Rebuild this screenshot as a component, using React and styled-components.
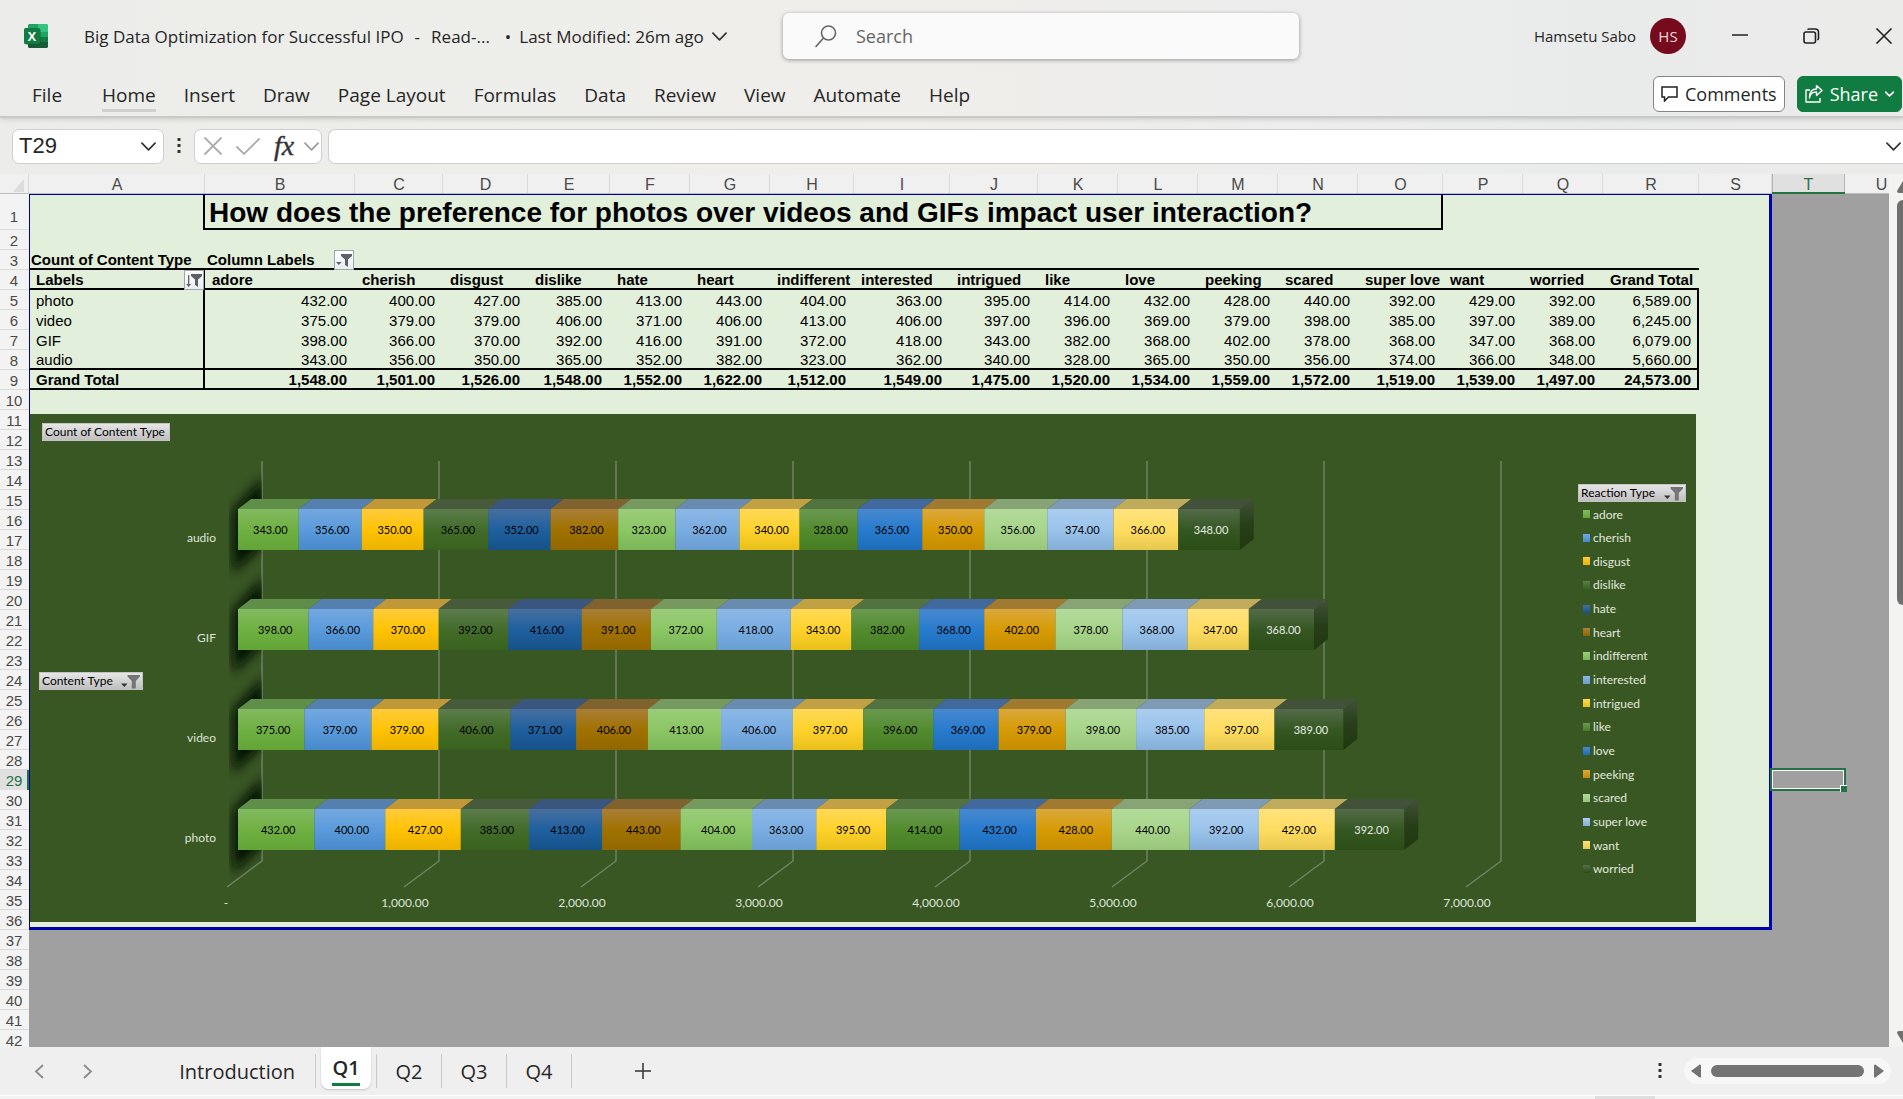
import React from "react";
import styled, { createGlobalStyle, css } from "styled-components";

const UI = '"Open Sans", "Noto Sans", sans-serif';
const SHEET = '"Liberation Sans", Arial, sans-serif';
const CHART = 'Lato, "Open Sans", sans-serif';

const GlobalStyle = createGlobalStyle`
  *, *::before, *::after { box-sizing: border-box; }
  html, body { margin: 0; height: 100%; overflow: hidden; }
  body { font-family: ${UI}; color: #262626; }
  button, input { font: inherit; color: inherit; }
  button { background: none; border: 0; padding: 0; cursor: pointer; }
  svg { display: block; flex: none; }
`;

/* ---------- window frame ---------- */

const Window = styled.div`
  display: flex;
  flex-direction: column;
  height: 100vh;
  overflow: hidden;
  background: linear-gradient(90deg, #ecedea 0%, #efeeea 48%, #ededed 66%, #e9ebea 85%, #ebebea 100%);
`;

const Header = styled.header`
  flex: none;
  height: 118px;
  border-bottom: 2px solid #c9c9c7;
  box-shadow: 0 1px 5px rgba(0, 0, 0, 0.16);
`;

const TitleBar = styled.div`
  display: grid;
  grid-template-columns: minmax(0, 783fr) minmax(0, 516fr) minmax(0, 604fr);
  align-items: center;
  height: 72px;
`;

const DocTitle = styled.div`
  display: flex;
  align-items: center;
  padding-left: 24px;
  font-size: 17px;
  white-space: nowrap;
`;

const DocButton = styled.button`
  display: flex;
  align-items: center;
  gap: 11px;
  margin-left: 36px;
`;

const DocStatus = styled.span`
  display: flex;
  align-items: center;
  gap: 8px;
  margin-left: 4px;
`;

const SearchBox = styled.label`
  display: flex;
  align-items: center;
  gap: 19px;
  height: 46px;
  padding-left: 32px;
  border-radius: 6px;
  background: #fafafa;
  color: #5f5f5f;
  box-shadow: 0 1px 4px rgba(0, 0, 0, 0.38);

  input {
    flex: 1;
    min-width: 0;
    border: 0;
    outline: 0;
    padding: 0;
    background: transparent;
    font-size: 18px;
  }
  input::placeholder { color: #666; opacity: 1; }
`;

const Account = styled.div`
  display: flex;
  align-items: center;
  justify-content: flex-end;
  padding-right: 10px;
  font-size: 15px;
`;

const Avatar = styled.span`
  display: grid;
  place-items: center;
  width: 36px;
  height: 36px;
  margin-left: 14px;
  border-radius: 50%;
  background: #750b1c;
  color: #f3d5da;
`;

const WindowButtons = styled.div`
  display: flex;
  gap: 55px;
  margin-left: 46px;
`;

const Ribbon = styled.div`
  display: flex;
  align-items: center;
  justify-content: space-between;
  height: 44px;
  padding: 0 1px 0 32px;
`;

const RibbonTabs = styled.nav`
  display: flex;
  gap: 28px;
  font-size: 19px;
  white-space: nowrap;
`;

const RibbonTab = styled.button`
  height: 32px;
  margin-top: 4px;
  line-height: 26px;
  border-bottom: 3px solid ${(p) => (p.$active ? "#cfcfce" : "transparent")};
  &:first-child { margin-right: 12px; }
`;

const RibbonActions = styled.div`
  display: flex;
  gap: 12px;
`;

const ActionButton = styled.button`
  display: flex;
  align-items: center;
  gap: 7px;
  height: 36px;
  padding: 0 7px;
  border: 1px solid ${(p) => (p.$primary ? "#107c41" : "#858585")};
  border-radius: 6px;
  background: ${(p) => (p.$primary ? "#107c41" : "#fff")};
  color: ${(p) => (p.$primary ? "#fff" : "#262626")};
  font-size: 18px;
`;

/* ---------- formula bar ---------- */

const FormulaBar = styled.div`
  flex: none;
  display: flex;
  align-items: center;
  height: 56px;
  padding-left: 12px;
`;

const Field = styled.div`
  display: flex;
  align-items: center;
  height: 35px;
  border: 1px solid #cfcfcf;
  border-radius: 7px;
  background: #fff;

  input {
    flex: 1;
    width: 0;
    min-width: 0;
    border: 0;
    outline: 0;
    padding: 0 6px;
    background: transparent;
    font-family: ${SHEET};
    font-size: 22px;
  }
`;

const NameField = styled(Field)`
  width: 152px;
  padding-right: 7px;
`;

const FunctionField = styled(Field)`
  width: 128px;
  gap: 14px;
  padding-left: 9px;
`;

const FormulaField = styled(Field)`
  flex: 1;
  margin-left: 6px;
  padding-right: 2px;
  border-right: 0;
  border-radius: 7px 0 0 7px;
`;

const BarDots = styled.div`
  display: flex;
  justify-content: center;
  width: 30px;
`;

const FxButton = styled.button`
  width: 16px;
  font: italic 28px/28px "Liberation Serif", serif;
  color: #333;
  -webkit-text-stroke: 0.4px #333;
`;

/* ---------- worksheet ---------- */

const Body = styled.main`
  flex: 1;
  min-height: 0;
  display: flex;
  overflow: hidden;
`;

const Sheet = styled.div`
  position: relative;
  flex: 1;
  min-width: 0;
  overflow: hidden;
  background: #a0a0a0;
`;

const Grid = styled.table`
  width: ${(p) => p.$width}px;
  table-layout: fixed;
  border-collapse: separate;
  border-spacing: 0;
  font-family: ${SHEET};
  font-size: 15px;
  color: #000;

  td, th { padding: 0; white-space: nowrap; vertical-align: bottom; line-height: 18px; }
`;

const ColHead = styled.th`
  height: 20px;
  font-size: 16px;
  font-weight: 400;
  color: ${(p) => (p.$on ? "#217346" : "#4a4a4a")};
  background: ${(p) => (p.$on ? "#e0e0e0" : "#f0f0f0")};
  box-shadow: ${(p) => (p.$on ? "inset 0 -2px #217346, inset -1px 0 #b5b5b5, inset 1px 0 #b5b5b5" : "inset 0 -1px #bdbdbd, inset -1px 0 #dadada")};
`;

const RowHead = styled.th`
  font-size: 15px;
  font-weight: 400;
  text-align: center;
  color: ${(p) => (p.$on ? "#217346" : "#4a4a4a")};
  background: ${(p) => (p.$on ? "#e0e0e0" : "#f3f3f3")};
  box-shadow: ${(p) => (p.$on ? "inset -2px 0 #217346" : "inset 0 -1px #dadada")};
  && { padding: ${(p) => (p.$tall ? "0 1px 4px 0" : "0 1px 0 0")}; }
`;

const Row = styled.tr`
  height: ${(p) => p.$height || 20}px;
`;

const edgeShadow = {
  top: "inset 0 1px #0000a8",
  left: "inset 1px 0 #0000a8",
  page: "inset -3px 0 #0000b4",
  foot: "inset 0 -3px #0000a8",
  right: "inset -2px 0 #000",
  bottom: "inset 0 -2px #000",
};

const Cell = styled.td`
  overflow: hidden;
  background: ${(p) => (p.$outside ? "#a0a0a0" : "#e2efda")};
  text-align: ${(p) => (p.$number ? "right" : "left")};
  font-weight: ${(p) => (p.$bold ? 700 : 400)};
  ${(p) => p.$edges && css`box-shadow: ${p.$edges.split(" ").map((e) => edgeShadow[e]).join(", ")};`}
  && {
    padding: 0 ${(p) => (p.$number ? 8 : 0)}px ${(p) => (p.$edges && p.$edges.includes("bottom") ? 1 : 0)}px ${(p) => (p.$number ? 0 : p.$indent ? 7 : 2)}px;
  }
`;

const TitleCell = styled(Cell)`
  && { padding: 0 0 1px 4px; line-height: 32px; }
  font-size: 28px;
  font-weight: 700;
`;

const FilterCell = styled(Cell)`
  && { padding-bottom: 0; }
`;

const Split = styled.div`
  display: flex;
  justify-content: space-between;
  height: 20px;
  line-height: 19px;
`;

const FilterButton = styled.button`
  display: grid;
  place-items: center;
  width: 20px;
  height: 20px;
  margin-right: 1px;
  border: 1px solid #9fa6ad;
  background: linear-gradient(#fff, #e9edf1);
`;

const Selection = styled.div`
  position: absolute;
  left: 1770px;
  top: 594px;
  width: 76px;
  height: 23px;
  border: 2px solid #217346;
  box-shadow: inset 0 0 0 1px #fff;

  &::after {
    content: "";
    position: absolute;
    right: -3px;
    bottom: -3px;
    width: 7px;
    height: 7px;
    border: 1px solid #fff;
    border-width: 1px 0 0 1px;
    background: #217346;
  }
`;

/* ---------- chart ---------- */

const ChartFrame = styled.figure`
  position: absolute;
  left: 30px;
  top: 240px;
  width: 1666px;
  height: 508px;
  margin: 0;
  background: #385723;
  font-family: ${CHART};
`;

const FieldButton = styled.button`
  position: absolute;
  left: ${(p) => p.$x}px;
  top: ${(p) => p.$y}px;
  display: flex;
  align-items: center;
  justify-content: space-between;
  width: ${(p) => p.$w}px;
  height: 18px;
  padding: 0 2px;
  border: 1px solid #c3c3c3;
  background: linear-gradient(#e6e6e6, #bfbfbf);
  color: #000;
  font-size: 12px;
  line-height: 16px;
  white-space: nowrap;
`;

const Legend = styled.ul`
  position: absolute;
  left: 1553px;
  top: 91px;
  height: 373px;
  margin: 0;
  padding: 0;
  display: flex;
  flex-direction: column;
  justify-content: space-between;
  list-style: none;
`;

const LegendItem = styled.li`
  display: flex;
  align-items: center;
  gap: 3px;
  height: 18px;
  color: #e3e8df;
  font-size: 12px;

  &::before {
    content: "";
    width: 7px;
    height: 8px;
    background: linear-gradient(${(p) => p.$hi}, ${(p) => p.$lo});
  }
`;

/* ---------- scroll bars and sheet tabs ---------- */

const VScroll = styled.div`
  flex: none;
  display: flex;
  flex-direction: column;
  align-items: flex-start;
  width: 14px;
  padding: 7px 0 4px 8px;
  overflow: hidden;
  background: #f3f3f2;
`;

const VThumb = styled.div`
  width: 12px;
  height: 405px;
  margin-top: 7px;
  margin-bottom: auto;
  border-radius: 6px;
  background: #6f6f6f;
`;

const TabBar = styled.footer`
  flex: none;
  display: flex;
  align-items: center;
  justify-content: space-between;
  height: 48px;
  padding: 0 12px 0 34px;
  background: #f0efef;
`;

const TabGroup = styled.div`
  display: flex;
  align-items: center;
  height: 100%;
`;

const ArrowButton = styled.button`
  width: 10px;
  margin-right: 39px;
`;

const SheetTab = styled.button`
  width: ${(p) => (p.$wide ? 184 : 65)}px;
  height: 34px;
  padding: ${(p) => (p.$wide ? "2px 20px 0 0" : "2px 0 0")};
  text-align: ${(p) => (p.$wide ? "right" : "center")};
  border-right: 1px solid #c9c9c9;
  font-size: 20px;
  line-height: 32px;
`;

const ActiveTab = styled.button`
  align-self: flex-start;
  width: 50px;
  height: 42px;
  margin: 0 5px;
  border-radius: 0 0 8px 8px;
  background: #fff;
  box-shadow: 0 1px 2px rgba(0, 0, 0, 0.18);
  font-size: 20px;
  font-weight: 600;

  span {
    display: inline-block;
    height: 35px;
    line-height: 34px;
    border-bottom: 3px solid #107c41;
  }
`;

const TabRule = styled.i`
  width: 1px;
  height: 34px;
  background: #c9c9c9;
`;

const AddSheet = styled.button`
  margin-left: 63px;
`;

const HScroll = styled.div`
  display: flex;
  align-items: center;
  justify-content: space-between;
  width: 207px;
  height: 26px;
  margin-left: 22px;
  padding: 0 7px;
  border-radius: 13px;
  background: #f7f7f7;
`;

const HThumb = styled.div`
  width: 153px;
  height: 12px;
  border-radius: 6px;
  background: #737373;
`;

const StatusEdge = styled.div`
  flex: none;
  display: flex;
  justify-content: flex-end;
  height: 4px;
  padding-right: 248px;
  border-top: 1px solid #fff;
  background: #f3f3f3;

  i { width: 60px; background: #dedede; }
`;

/* ---------- icons ---------- */

const Chevron = ({ w = 15, h = 9, color = "#333", sw = 1.8 }) => (
  <svg width={w} height={h} viewBox="0 0 16 9" fill="none" stroke={color} strokeWidth={sw} strokeLinecap="round" strokeLinejoin="round">
    <path d="M1 1l7 7 7-7" />
  </svg>
);

const Dots = () => (
  <svg width="4" height="16" viewBox="0 0 4 16" fill="#333">
    <rect x=".5" width="3" height="3" rx=".5" />
    <rect x=".5" y="6" width="3" height="3" rx=".5" />
    <rect x=".5" y="12" width="3" height="3" rx=".5" />
  </svg>
);

const ExcelLogo = () => (
  <svg width="24" height="24" viewBox="0 0 24 24">
    <path d="M5 0h10v8H4V1z" fill="#21a366" />
    <path d="M14 0h9l1 1v7H14z" fill="#33c481" />
    <path d="M4 8h10v8H4z" fill="#107c41" />
    <path d="M14 8h10v5H14z" fill="#21a366" />
    <path d="M14 13h10v5H14z" fill="#107c41" />
    <path d="M4 16h10v2h10v5l-1 1H5l-1-1z" fill="#185c37" />
    <rect x="1" y="5" width="16" height="16" rx="1.5" fill="#0b4a28" opacity=".35" />
    <rect y="4" width="16" height="16" rx="1.5" fill="#107c41" />
    <text x="8" y="16.5" textAnchor="middle" fontFamily="Open Sans, sans-serif" fontWeight="700" fontSize="12.5" fill="#fff">X</text>
  </svg>
);

const Funnel = ({ sorted, dark }) => (
  <svg width={dark ? 19 : 16} height="15" viewBox={dark ? "0 0 19 15" : "0 0 16 15"} fill={dark ? "#757575" : "#5c6068"}>
    {dark ? (
      <>
        <path d="M6.500 1H19v1.500L14.800 7v7.500h-4V7L6.500 2.500z" />
        <path d="M0 9.500h6.500L3.300 13z" fill="#333" />
      </>
    ) : (
      <>
        <path d="M5 1h11v2l-4 3.600V14L9 12V6.600L5 3z" />
        {sorted ? <path d="M2 2h1.300v9H5l-2.400 3L.2 11H2z" /> : <path d="M0 9h5.600L2.800 12z" />}
      </>
    )}
  </svg>
);

/* ---------- data ---------- */

const HEAD_WIDTH = 29;
const columns = [
  ["A", 176], ["B", 150], ["C", 88], ["D", 85], ["E", 82], ["F", 80], ["G", 80], ["H", 84], ["I", 96], ["J", 88],
  ["K", 80], ["L", 80], ["M", 80], ["N", 80], ["O", 85], ["P", 80], ["Q", 80], ["R", 96], ["S", 73], ["T", 73], ["U", 73],
];

const series = [
  { name: "adore", top: "#5f8e48", hi: "#82bb60", mid: "#70b043", lo: "#62a536" },
  { name: "cherish", top: "#557fae", hi: "#73a8df", mid: "#5b9bdb", lo: "#4789cb" },
  { name: "disgust", top: "#c09838", hi: "#ffcb3c", mid: "#ffc305", lo: "#eab200" },
  { name: "dislike", top: "#475b3c", hi: "#5c7d4c", mid: "#436c2a", lo: "#38621d" },
  { name: "hate", top: "#3a567f", hi: "#476f9f", mid: "#1f609f", lo: "#165289" },
  { name: "heart", top: "#80622f", hi: "#a87e38", mid: "#a17200", lo: "#926700" },
  { name: "indifferent", top: "#76995f", hi: "#9acd79", mid: "#8cc766", lo: "#7ab656" },
  { name: "interested", top: "#6a8bb0", hi: "#8bb8e6", mid: "#7aade2", lo: "#6a9dd1" },
  { name: "intrigued", top: "#c2a044", hi: "#ffd957", mid: "#ffd22c", lo: "#e8c019" },
  { name: "like", top: "#52733f", hi: "#6a9951", mid: "#538c2f", lo: "#477e24" },
  { name: "love", top: "#41699d", hi: "#4889cf", mid: "#287bcd", lo: "#1d6cb9" },
  { name: "peeking", top: "#a17a32", hi: "#dba83c", mid: "#d69b05", lo: "#c58c00" },
  { name: "scared", top: "#88a376", hi: "#b3db9b", mid: "#a8d58b", lo: "#98c67a" },
  { name: "super love", top: "#7f9ab4", hi: "#abcdef", mid: "#9bc4eb", lo: "#85aed7" },
  { name: "want", top: "#c0aa5b", hi: "#ffe27e", mid: "#ffdd61", lo: "#e7c84e" },
  { name: "worried", top: "#42513a", hi: "#546b49", mid: "#355822", lo: "#2b4e17", light: true },
];

const records = {
  photo: [432, 400, 427, 385, 413, 443, 404, 363, 395, 414, 432, 428, 440, 392, 429, 392],
  video: [375, 379, 379, 406, 371, 406, 413, 406, 397, 396, 369, 379, 398, 385, 397, 389],
  GIF: [398, 366, 370, 392, 416, 391, 372, 418, 343, 382, 368, 402, 378, 368, 347, 368],
  audio: [343, 356, 350, 365, 352, 382, 323, 362, 340, 328, 365, 350, 356, 374, 366, 348],
};
const kinds = Object.keys(records);
const sum = (a) => a.reduce((t, v) => t + v, 0);
const money = (v) => v.toLocaleString("en-US", { minimumFractionDigits: 2 });
const totals = series.map((_, i) => sum(kinds.map((k) => records[k][i])));

/* ---------- worksheet rows ---------- */

const Outside = () => (
  <>
    <Cell $outside />
    <Cell $outside />
  </>
);

const Head = ({ n }) => <RowHead scope="row" $on={n === 29} $tall={n === 1}>{n}</RowHead>;

const DataRow = ({ n, label, values, bold, line }) => {
  const edge = line ? " bottom" : "";
  return (
    <Row>
      <Head n={n} />
      <Cell $indent $bold={bold} $edges={"left right" + edge}>{label}</Cell>
      {values.map((v, i) => (
        <Cell key={i} $number $bold={bold} $edges={edge.trim() || undefined}>{money(v)}</Cell>
      ))}
      <Cell $number $bold={bold} $edges={"right" + edge}>{money(sum(values))}</Cell>
      <Cell $edges="page" />
      <Outside />
    </Row>
  );
};

const BlankRow = ({ n }) => (
  <Row>
    <Head n={n} />
    {n <= 36 ? (
      <>
        <Cell colSpan={18} $edges={n === 36 ? "left foot" : "left"} />
        <Cell $edges={n === 36 ? "page foot" : "page"} />
        <Outside />
      </>
    ) : (
      <Cell $outside colSpan={21} />
    )}
  </Row>
);

const Worksheet = () => (
  <Grid $width={HEAD_WIDTH + sum(columns.map(([, w]) => w))}>
    <colgroup>
      <col style={{ width: HEAD_WIDTH }} />
      {columns.map(([c, w]) => <col key={c} style={{ width: w }} />)}
    </colgroup>
    <thead>
      <tr>
        <ColHead>
          <svg width="28" height="18" viewBox="0 0 28 18" aria-hidden="true"><path d="M24 3v13H13z" fill="#dcdcdc" /></svg>
        </ColHead>
        {columns.map(([c]) => <ColHead key={c} scope="col" $on={c === "T"}>{c}</ColHead>)}
      </tr>
    </thead>
    <tbody>
      <Row $height={36}>
        <Head n={1} />
        <Cell $edges="top left right" />
        <TitleCell colSpan={14} $edges="top right bottom">How does the preference for photos over videos and GIFs impact user interaction?</TitleCell>
        <Cell colSpan={3} $edges="top" />
        <Cell $edges="page top" />
        <Outside />
      </Row>
      <BlankRow n={2} />
      <Row>
        <Head n={3} />
        <Cell $bold $edges="left bottom">Count of Content Type</Cell>
        <FilterCell $bold $edges="bottom">
          <Split>Column Labels <FilterButton aria-label="Filter columns"><Funnel /></FilterButton></Split>
        </FilterCell>
        <Cell colSpan={16} $edges="bottom" />
        <Cell $edges="page" />
        <Outside />
      </Row>
      <Row>
        <Head n={4} />
        <FilterCell $bold $indent $edges="left right bottom">
          <Split>Labels <FilterButton aria-label="Filter rows"><Funnel sorted /></FilterButton></Split>
        </FilterCell>
        {series.map((s) => <Cell key={s.name} $bold $indent $edges="bottom">{s.name}</Cell>)}
        <Cell $bold $indent $edges="bottom">Grand Total</Cell>
        <Cell $edges="page" />
        <Outside />
      </Row>
      {kinds.map((k, i) => <DataRow key={k} n={5 + i} label={k} values={records[k]} line={i === 3} />)}
      <DataRow n={9} label="Grand Total" values={totals} bold line />
      {Array.from({ length: 33 }, (_, i) => <BlankRow key={i} n={10 + i} />)}
    </tbody>
  </Grid>
);

/* ---------- stacked 3-D bars ---------- */

const SCALE = 0.177;
const X0 = 208;

const Bar = ({ y, label, values }) => {
  let x = X0;
  const end = X0 + sum(values) * SCALE;
  return (
    <g>
      <g clipPath="url(#wall)">
        <path d={`M${X0 - 5} ${y + 2}L${X0 + 26} ${y - 32}V${y + 34}L${X0 - 5} ${y + 64}Z`} fill="#060c02" filter="url(#soft)" />
      </g>
      <text x="186" y={y + 33} textAnchor="end" fontSize="12" fill="#dfe5da">{label}</text>
      {values.map((v, i) => {
        const s = series[i];
        const w = v * SCALE;
        const x1 = x;
        x += w;
        return (
          <g key={s.name}>
            <path d={`M${x1} ${y}L${x1 + 13} ${y - 10}H${x + 13}L${x} ${y}Z`} fill={s.top} />
            <rect x={x1} y={y} width={w} height="41" fill={`url(#face${i})`} />
            <text x={x1 + w / 2 + 2} y={y + 25} textAnchor="middle" fontSize="11" fill={s.light ? "#e8ece5" : "#000"}>{money(v)}</text>
          </g>
        );
      })}
      <path d={`M${end} ${y}L${end + 14} ${y - 10}V${y + 30}L${end} ${y + 41}Z`} fill="url(#side)" />
    </g>
  );
};

const Plot = () => (
  <svg width="1666" height="508" viewBox="0 0 1666 508" role="img" aria-label="Count of content type by reaction" fontFamily={CHART}>
    <defs>
      {series.map((s, i) => (
        <linearGradient key={s.name} id={`face${i}`} x1="0" y1="0" x2="0" y2="1">
          <stop offset="0" stopColor={s.hi} />
          <stop offset=".5" stopColor={s.mid} />
          <stop offset="1" stopColor={s.lo} />
        </linearGradient>
      ))}
      <linearGradient id="side" x1="0" y1="0" x2="0" y2="1">
        <stop offset="0" stopColor="#42513a" />
        <stop offset=".5" stopColor="#273f19" />
        <stop offset="1" stopColor="#20380f" />
      </linearGradient>
      <filter id="soft" x="-100%" y="-50%" width="300%" height="200%"><feGaussianBlur stdDeviation="6" /></filter>
      <clipPath id="wall"><path d="M199 0H232V447L199 473Z" /></clipPath>
    </defs>
    {Array.from({ length: 8 }, (_, i) => {
      const x = 232 + i * 177;
      return (
        <g key={i}>
          <path d={`M${x} 47V447L${x - 35} 473`} fill="none" stroke="#73846a" strokeWidth="1.400" />
          <text x={x - (i ? 34 : 36)} y="493" textAnchor="middle" fontSize="12" fill="#dfe5da">{i ? money(i * 1000) : "-"}</text>
        </g>
      );
    })}
    {[...kinds].reverse().map((k, i) => <Bar key={k} y={95 + i * 100} label={k} values={records[k]} />)}
  </svg>
);

const PivotChart = () => (
  <ChartFrame>
    <Plot />
    <FieldButton $x={12} $y={9} $w={128}>Count of Content Type</FieldButton>
    <FieldButton $x={9} $y={258} $w={104}>Content Type <Funnel dark /></FieldButton>
    <FieldButton $x={1548} $y={70} $w={108}>Reaction Type <Funnel dark /></FieldButton>
    <Legend>
      {series.map((s) => <LegendItem key={s.name} $hi={s.hi} $lo={s.lo}>{s.name}</LegendItem>)}
    </Legend>
  </ChartFrame>
);

/* ---------- page ---------- */

const menu = ["File", "Home", "Insert", "Draw", "Page Layout", "Formulas", "Data", "Review", "View", "Automate", "Help"];

export default function App() {
  return (
    <Window>
      <GlobalStyle />
      <Header>
        <TitleBar>
          <DocTitle>
            <ExcelLogo />
            <DocButton>
              <span>Big Data Optimization for Successful IPO</span>
              <span>-</span>
              <span>Read-...</span>
              <DocStatus>
                <span>•</span>
                <span>Last Modified: 26m ago</span>
                <Chevron />
              </DocStatus>
            </DocButton>
          </DocTitle>
          <SearchBox>
            <svg width="22" height="23" viewBox="0 0 22 23" fill="none" stroke="#666" strokeWidth="1.600" strokeLinecap="round">
              <circle cx="13.500" cy="8" r="7" />
              <path d="M8.500 13L1 21.500" />
            </svg>
            <input type="search" placeholder="Search" aria-label="Search" />
          </SearchBox>
          <Account>
            <span>Hamsetu Sabo</span>
            <Avatar>HS</Avatar>
            <WindowButtons>
              <button aria-label="Minimize">
                <svg width="16" height="16" viewBox="0 0 16 16" stroke="#222" strokeWidth="1.500"><path d="M0 7h16" /></svg>
              </button>
              <button aria-label="Restore">
                <svg width="17" height="16" viewBox="0 0 17 16" fill="none" stroke="#222" strokeWidth="1.600">
                  <rect x="1" y="4" width="11.500" height="11" rx="2" />
                  <path d="M4.500 1.500C5 1 5.500 1 6 1h6.500a3 3 0 0 1 3 3v6c0 1-.3 1.500-1 2" />
                </svg>
              </button>
              <button aria-label="Close">
                <svg width="18" height="16" viewBox="0 0 18 16" fill="none" stroke="#222" strokeWidth="1.600"><path d="M1.500 .5l15 15M16.500 .5l-15 15" /></svg>
              </button>
            </WindowButtons>
          </Account>
        </TitleBar>
        <Ribbon>
          <RibbonTabs>
            {menu.map((m) => <RibbonTab key={m} $active={m === "Home"}>{m}</RibbonTab>)}
          </RibbonTabs>
          <RibbonActions>
            <ActionButton>
              <svg width="17" height="16" viewBox="0 0 17 16" fill="none" stroke="#222" strokeWidth="1.500"><path d="M1 1h15v10H7.500L3.500 15v-4H1z" /></svg>
              Comments
            </ActionButton>
            <ActionButton $primary>
              <svg width="18" height="18" viewBox="0 0 18 18" fill="none" stroke="#fff" strokeWidth="1.400" strokeLinejoin="round">
                <path d="M5 5H1v12h14v-4M4.500 13C5 8.500 7.500 7 11.500 7v3.500L17 5.500l-5.500-5V4C7 4 4.500 7 4.500 13z" />
              </svg>
              Share
              <Chevron w={9} h={6} color="#fff" sw={3} />
            </ActionButton>
          </RibbonActions>
        </Ribbon>
      </Header>

      <FormulaBar>
        <NameField>
          <input aria-label="Name box" defaultValue="T29" />
          <Chevron />
        </NameField>
        <BarDots><Dots /></BarDots>
        <FunctionField>
          <button aria-label="Cancel">
            <svg width="18" height="18" viewBox="0 0 18 18" stroke="#adadad" strokeWidth="1.800" strokeLinecap="round"><path d="M1 1l16 16M17 1L1 17" /></svg>
          </button>
          <button aria-label="Enter">
            <svg width="24" height="17" viewBox="0 0 24 17" fill="none" stroke="#adadad" strokeWidth="1.800" strokeLinecap="round"><path d="M1 9l7 7L23 1" /></svg>
          </button>
          <FxButton aria-label="Insert function">fx</FxButton>
          <Chevron color="#9a9a9a" />
        </FunctionField>
        <FormulaField>
          <input aria-label="Formula" />
          <Chevron />
        </FormulaField>
      </FormulaBar>

      <Body>
        <Sheet>
          <Worksheet />
          <PivotChart />
          <Selection />
        </Sheet>
        <VScroll>
          <svg width="12" height="12" viewBox="0 0 12 12" fill="#6f6f6f"><path d="M6 0l6 10q0 2-2 2H2q-2 0-2-2z" /></svg>
          <VThumb />
          <svg width="12" height="12" viewBox="0 0 12 12" fill="#6f6f6f"><path d="M6 12L0 2q0-2 2-2h8q2 0 2 2z" /></svg>
        </VScroll>
      </Body>

      <TabBar>
        <TabGroup>
          <ArrowButton aria-label="Previous sheet">
            <svg width="10" height="15" viewBox="0 0 10 15" fill="none" stroke="#8c8c8c" strokeWidth="1.800"><path d="M9 1L2 7.500 9 14" /></svg>
          </ArrowButton>
          <ArrowButton aria-label="Next sheet">
            <svg width="10" height="15" viewBox="0 0 10 15" fill="none" stroke="#8c8c8c" strokeWidth="1.800"><path d="M1 1l7 6.500L1 14" /></svg>
          </ArrowButton>
          <SheetTab $wide>Introduction</SheetTab>
          <ActiveTab><span>Q1</span></ActiveTab>
          <TabRule />
          <SheetTab>Q2</SheetTab>
          <SheetTab>Q3</SheetTab>
          <SheetTab>Q4</SheetTab>
          <AddSheet aria-label="New sheet">
            <svg width="16" height="16" viewBox="0 0 16 16" stroke="#333" strokeWidth="1.500"><path d="M8 0v16M0 8h16" /></svg>
          </AddSheet>
        </TabGroup>
        <TabGroup>
          <Dots />
          <HScroll>
            <svg width="10" height="14" viewBox="0 0 10 14" fill="#737373"><path d="M10 1v12q-1 1-2 0L0 7l8-6q1-1 2 0z" /></svg>
            <HThumb />
            <svg width="10" height="14" viewBox="0 0 10 14" fill="#737373"><path d="M0 1v12q1 1 2 0l8-6-8-6q-1-1-2 0z" /></svg>
          </HScroll>
        </TabGroup>
      </TabBar>
      <StatusEdge><i /></StatusEdge>
    </Window>
  );
}
